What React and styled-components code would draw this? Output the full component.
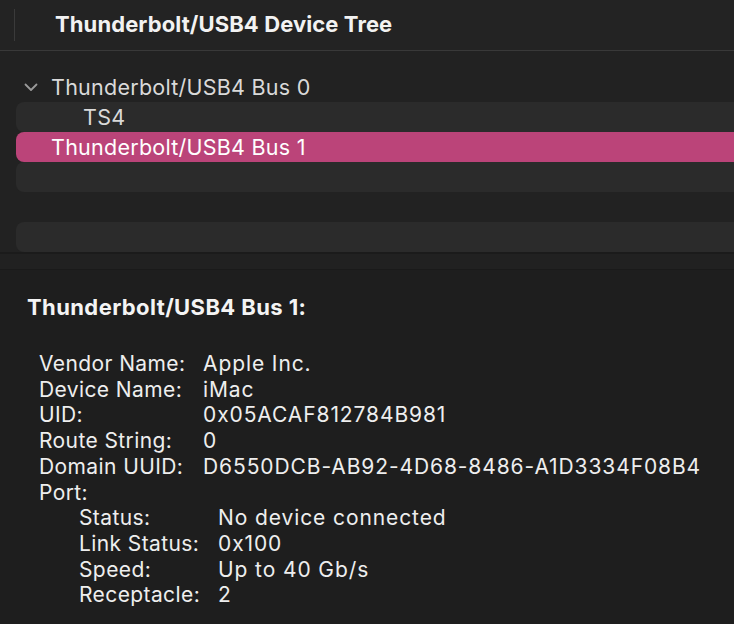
import React from 'react';
import styled, { createGlobalStyle } from 'styled-components';

const GlobalStyle = createGlobalStyle`
  html, body {
    margin: 0;
    padding: 0;
    background: #1e1e1e;
  }
  body {
    font-family: Inter, "Noto Sans", sans-serif;
    -webkit-font-smoothing: antialiased;
  }
`;

const Window = styled.div`
  width: 734px;
  height: 624px;
  overflow: hidden;
  display: flex;
  flex-direction: column;
  background: #1e1e1e;
`;

const Toolbar = styled.header`
  height: 50px;
  flex: none;
  display: flex;
  align-items: center;
  background: #232323;
  border-bottom: 1px solid #393939;
`;

const ToolbarDivider = styled.span`
  width: 1px;
  height: 32px;
  margin: 0 40px 0 14px;
  background: #3a3a3a;
`;

const ToolbarTitle = styled.h1`
  margin: 0 0 2px;
  font-size: 22px;
  font-weight: 700;
  color: #f2f2f2;
  letter-spacing: 0.1px;
`;

const Tree = styled.div`
  height: 201px;
  flex: none;
  padding-top: 21px;
  box-sizing: border-box;
  background: #222222;
  display: flex;
  flex-direction: column;
`;

const Row = styled.div`
  height: 30px;
  flex: none;
  display: flex;
  align-items: center;
  margin-left: 16px;
  padding-left: ${(p) => p.$indent}px;
  border-radius: 8px 0 0 8px;
  background: ${(p) => (p.$selected ? '#bb4479' : p.$striped ? '#2b2b2b' : 'transparent')};
  color: ${(p) => (p.$selected ? '#ffffff' : '#d9d9d9')};
  font-size: 21.5px;
  letter-spacing: 0.25px;
  position: relative;
`;

const Chevron = styled.svg`
  position: absolute;
  left: 8px;
  top: 11px;
`;

const ScrollBand = styled.div`
  height: 18px;
  flex: none;
  background: #212121;
  border-top: 2px solid #1b1b1b;
  border-bottom: 1px solid #1a1a1a;
  box-sizing: border-box;
`;

const Details = styled.section`
  flex: 1;
  padding: 24px 0 0 27px;
  color: #eeeeee;
`;

const DetailsTitle = styled.h2`
  margin: 0 0 31px;
  font-size: 22px;
  line-height: 26px;
  font-weight: 700;
  letter-spacing: 0.4px;
  color: #f4f4f4;
`;

const InfoGrid = styled.div`
  display: grid;
  grid-template-columns: ${(p) => p.$labelWidth}px auto;
  padding-left: ${(p) => p.$indent}px;
  font-size: 21px;
  line-height: 25.7px;
  letter-spacing: 0.4px;
`;

const Label = styled.span`
  white-space: nowrap;
`;

const Value = styled.span`
  white-space: nowrap;
  letter-spacing: 0.9px;
`;

const topInfo = [
  ['Vendor Name:', 'Apple Inc.'],
  ['Device Name:', 'iMac'],
  ['UID:', '0x05ACAF812784B981'],
  ['Route String:', '0'],
  ['Domain UUID:', 'D6550DCB-AB92-4D68-8486-A1D3334F08B4'],
];

const portInfo = [
  ['Status:', 'No device connected'],
  ['Link Status:', '0x100'],
  ['Speed:', 'Up to 40 Gb/s'],
  ['Receptacle:', '2'],
];

export default function App() {
  return (
    <Window>
      <GlobalStyle />
      <Toolbar>
        <ToolbarDivider />
        <ToolbarTitle>Thunderbolt/USB4 Device Tree</ToolbarTitle>
      </Toolbar>

      <Tree>
        <Row $indent={35}>
          <Chevron width="14" height="9" viewBox="0 0 14 9">
            <path d="M1.5 1.5L7 7l5.5-5.5" fill="none" stroke="#9a9a9a" strokeWidth="1.8" strokeLinecap="round" strokeLinejoin="round" />
          </Chevron>
          Thunderbolt/USB4 Bus 0
        </Row>
        <Row $indent={67} $striped>TS4</Row>
        <Row $indent={35} $selected>Thunderbolt/USB4 Bus 1</Row>
        <Row $striped />
        <Row />
        <Row $striped />
      </Tree>

      <ScrollBand />

      <Details>
        <DetailsTitle>Thunderbolt/USB4 Bus 1:</DetailsTitle>
        <InfoGrid $labelWidth={164} $indent={12}>
          {topInfo.map(([k, v]) => (
            <React.Fragment key={k}>
              <Label>{k}</Label>
              <Value>{v}</Value>
            </React.Fragment>
          ))}
          <Label>Port:</Label>
          <Value />
        </InfoGrid>
        <InfoGrid $labelWidth={139} $indent={52}>
          {portInfo.map(([k, v]) => (
            <React.Fragment key={k}>
              <Label>{k}</Label>
              <Value>{v}</Value>
            </React.Fragment>
          ))}
        </InfoGrid>
      </Details>
    </Window>
  );
}
